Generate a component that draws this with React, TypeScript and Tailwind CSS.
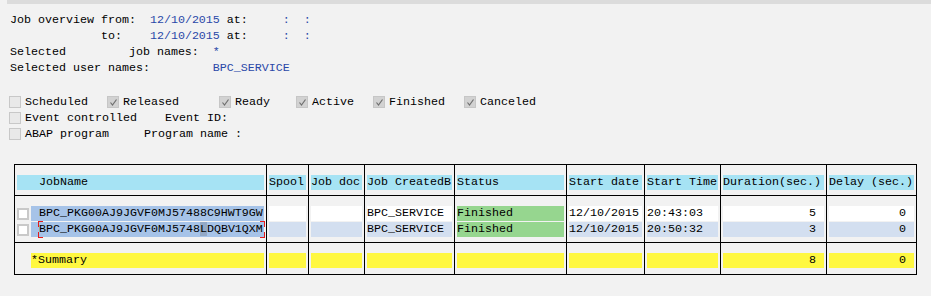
import React from "react";

const mono = { fontFamily: '"Liberation Mono", "Courier New", monospace' };

function Blue({ children }: { children: React.ReactNode }) {
  return <span className="text-[#2a48a8]">{children}</span>;
}

function Box({ checked }: { checked?: boolean }) {
  return (
    <span
      className={
        "relative inline-block w-[12px] h-[12px] shrink-0 mr-[4px] border " +
        (checked ? "border-[#c6c6c6] bg-[#d2d2d2]" : "border-[#c8c8c8] bg-[#e9e9e9]")
      }
    >
      {checked && (
        <svg className="absolute left-[1px] top-[1px]" width="9" height="9" viewBox="0 0 9 9">
          <path d="M1.5 4.5 L3.5 7 L7.5 1.5" fill="none" stroke="#707070" strokeWidth="1.2" />
        </svg>
      )}
    </span>
  );
}

function Item({ w, checked, label, box = true }: { w?: string; checked?: boolean; label: string; box?: boolean }) {
  return (
    <div className={"flex items-center h-[16px] leading-[16px] " + (w ?? "")}>
      {box && <Box checked={checked} />}
      <span className="whitespace-pre">{label}</span>
    </div>
  );
}

const cols = [
  "w-[252px] border-r",
  "w-[42px] border-r",
  "w-[56px] border-r",
  "w-[90px] border-r",
  "w-[112px] border-r",
  "w-[78px] border-r",
  "w-[76px] border-r",
  "w-[106px] border-r",
  "w-[89px]",
];

function Col({ i, children }: { i: number; children: React.ReactNode }) {
  return (
    <div className={"flex flex-col gap-[1px] pt-[10px] px-[2px] border-black " + cols[i]}>{children}</div>
  );
}

function Cell({ bg, children, right, pl = "pl-0" }: { bg: string; children?: React.ReactNode; right?: boolean; pl?: string }) {
  return (
    <div
      className={
        "h-[15px] leading-[15px] whitespace-pre overflow-hidden " +
        bg +
        " " +
        (right ? "text-right pr-[8px]" : pl)
      }
    >
      {children}
    </div>
  );
}

const CY = "bg-[#a6e3f4]";
const SEL = "bg-[#a6c3e8]";
const LB = "bg-[#d3dff0]";
const WH = "bg-white";
const GR = "bg-[#96d68f]";
const YE = "bg-[#fff841]";

function TBox() {
  return <span className="inline-block w-[12px] h-[12px] shrink-0 border-2 border-[#c9c9c9] bg-white" />;
}

export default function App() {
  const headers = ["Spool", "Job doc", "Job CreatedB", "Status", "Start date", "Start Time", "Duration(sec.)", "Delay (sec.)"];
  return (
    <div className="w-[931px] h-[296px] bg-[#f2f2f2] text-black text-[11.67px] leading-[16px] overflow-hidden" style={mono}>
      <div className="ml-[7px] h-[4px] bg-[#dcdcdc]" />

      <div className="mt-[8px] pl-[10px] leading-[16px] whitespace-pre">
        <div>
          {"Job overview from:  "}
          <Blue>12/10/2015</Blue>
          {" at:     "}
          <Blue>:</Blue>
          {"  "}
          <Blue>:</Blue>
        </div>
        <div>
          {"             to:    "}
          <Blue>12/10/2015</Blue>
          {" at:     "}
          <Blue>:</Blue>
          {"  "}
          <Blue>:</Blue>
        </div>
        <div>
          {"Selected         job names:  "}
          <Blue>*</Blue>
        </div>
        <div>
          {"Selected user names:         "}
          <Blue>BPC_SERVICE</Blue>
        </div>
      </div>

      <div className="mt-[18px] pl-[9px]">
        <div className="flex">
          <Item w="w-[98px]" label="Scheduled" />
          <Item w="w-[112px]" checked label="Released" />
          <Item w="w-[77px]" checked label="Ready" />
          <Item w="w-[77px]" checked label="Active" />
          <Item w="w-[91px]" checked label="Finished" />
          <Item checked label="Canceled" />
        </div>
        <div className="flex">
          <Item w="w-[156px]" label="Event controlled" />
          <Item box={false} label="Event ID:" />
        </div>
        <div className="flex">
          <Item w="w-[135px]" label="ABAP program" />
          <Item box={false} label="Program name :" />
        </div>
      </div>

      <div className="mt-[22px] ml-[14px] w-[903px] border border-black">
        {/* header */}
        <div className="flex h-[31px] border-b border-black">
          <Col i={0}>
            <Cell bg={CY} pl="pl-[22px]">JobName</Cell>
          </Col>
          {headers.map((h, k) => (
            <Col key={h} i={k + 1}>
              <Cell bg={CY}>{h}</Cell>
            </Col>
          ))}
        </div>

        {/* data */}
        <div className="flex h-[47px] border-b border-black">
          <Col i={0}>
            <div className="flex items-center h-[15px] gap-[2px]">
              <TBox />
              <div className="flex-1">
                <Cell bg={SEL} pl="pl-[8px]">BPC_PKG00AJ9JGVF0MJ57488C9HWT9GW</Cell>
              </div>
            </div>
            <div className="flex items-center h-[15px] gap-[2px]">
              <TBox />
              <div className="relative flex-1">
                <Cell bg={SEL} pl="pl-[8px]">
                  {"BPC_PKG00AJ9JGVF0MJ5748"}
                  <span className="bg-[#93a9c6]">L</span>
                  {"DQBV1QXM"}
                </Cell>
                <div className="absolute left-[7px] top-[-1px] w-[5px] h-[6px] border-l border-t border-[#e31b1b]" />
                <div className="absolute left-[7px] bottom-[-1px] w-[5px] h-[6px] border-l border-b border-[#e31b1b]" />
                <div className="absolute right-[-1px] top-[-1px] w-[5px] h-[6px] border-r border-t border-[#e31b1b]" />
                <div className="absolute right-[-1px] bottom-[-1px] w-[5px] h-[6px] border-r border-b border-[#e31b1b]" />
              </div>
            </div>
          </Col>
          <Col i={1}>
            <Cell bg={WH} />
            <Cell bg={LB} />
          </Col>
          <Col i={2}>
            <Cell bg={WH} />
            <Cell bg={LB} />
          </Col>
          <Col i={3}>
            <Cell bg={WH}>BPC_SERVICE</Cell>
            <Cell bg={LB}>BPC_SERVICE</Cell>
          </Col>
          <Col i={4}>
            <Cell bg={GR}>Finished</Cell>
            <Cell bg={GR}>Finished</Cell>
          </Col>
          <Col i={5}>
            <Cell bg={WH}>12/10/2015</Cell>
            <Cell bg={LB}>12/10/2015</Cell>
          </Col>
          <Col i={6}>
            <Cell bg={WH}>20:43:03</Cell>
            <Cell bg={LB}>20:50:32</Cell>
          </Col>
          <Col i={7}>
            <Cell bg={WH} right>5</Cell>
            <Cell bg={LB} right>3</Cell>
          </Col>
          <Col i={8}>
            <Cell bg={WH} right>0</Cell>
            <Cell bg={LB} right>0</Cell>
          </Col>
        </div>

        {/* summary */}
        <div className="flex h-[31px]">
          <Col i={0}>
            <div className="ml-[14px]">
              <Cell bg={YE}>*Summary</Cell>
            </div>
          </Col>
          {[1, 2, 3, 4, 5, 6].map((k) => (
            <Col key={k} i={k}>
              <Cell bg={YE} />
            </Col>
          ))}
          <Col i={7}>
            <Cell bg={YE} right>8</Cell>
          </Col>
          <Col i={8}>
            <Cell bg={YE} right>0</Cell>
          </Col>
        </div>
      </div>
    </div>
  );
}
